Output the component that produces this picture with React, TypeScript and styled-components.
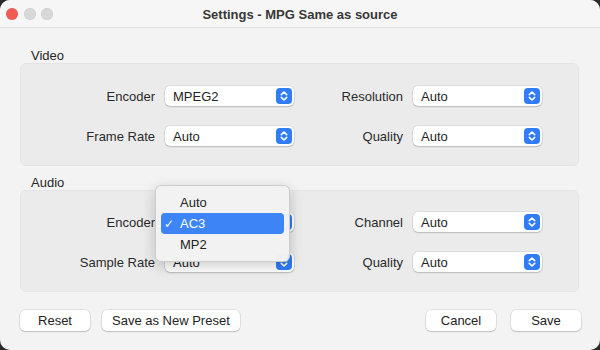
import React from 'react';
import styled, { createGlobalStyle } from 'styled-components';

const Global = createGlobalStyle`
  html, body { margin: 0; padding: 0; background: #2a2a2a; }
  body { font-family: "Liberation Sans", Arial, sans-serif; -webkit-font-smoothing: antialiased; }
  * { box-sizing: border-box; }
`;

const Window = styled.div`
  width: 600px;
  height: 350px;
  border-radius: 10px;
  overflow: hidden;
  background: #f3f3f3;
  display: flex;
  flex-direction: column;
`;

const TitleBar = styled.div`
  height: 28px;
  flex: none;
  display: grid;
  grid-template-columns: 1fr auto 1fr;
  align-items: center;
  background: #f6f6f6;
  border-bottom: 1px solid #e0e0e0;
`;

const Lights = styled.div`
  display: flex;
  gap: 5.5px;
  padding-left: 6px;
`;

const Light = styled.span<{ $color: string }>`
  width: 12px;
  height: 12px;
  border-radius: 50%;
  background: ${(p) => p.$color};
  box-shadow: inset 0 0 0 0.5px rgba(0, 0, 0, 0.08);
`;

const Title = styled.div`
  font-size: 13px;
  font-weight: 700;
  color: #383838;
  padding-top: 1px;
`;

const Content = styled.div`
  flex: none;
  display: flex;
  flex-direction: column;
  padding: 20px 21px 0 20px;
`;

const SectionLabel = styled.div<{ $top?: number }>`
  font-size: 13px;
  line-height: 15px;
  color: #262626;
  padding-left: 11px;
  margin-top: ${(p) => p.$top ?? 0}px;
`;

const Panel = styled.div<{ $padTop: number }>`
  display: grid;
  grid-template-columns: 125px 129px 1fr 129px;
  grid-auto-rows: 20px;
  column-gap: 10px;
  row-gap: 20px;
  align-items: center;
  padding: ${(p) => p.$padTop}px 36px 19px 9px;
  background: #ebebeb;
  border: 1px solid #e4e4e4;
  border-radius: 6px;
`;

const FieldLabel = styled.div`
  font-size: 13px;
  color: #2a2a2a;
  text-align: right;
  white-space: nowrap;
`;

const SelectWrap = styled.div`
  position: relative;
  height: 20px;
`;

const SelectBox = styled.div`
  height: 20px;
  width: 129px;
  background: #ffffff;
  border-radius: 5px;
  box-shadow: 0 0 0 0.5px rgba(0, 0, 0, 0.12), 0 1px 1.5px rgba(0, 0, 0, 0.16);
  display: flex;
  align-items: center;
  justify-content: space-between;
  padding: 0 2px 0 8px;
  font-size: 13px;
  color: #232323;
`;

const Menu = styled.div`
  position: absolute;
  left: -10px;
  top: -27px;
  width: 135px;
  padding: 6px 5px;
  background: rgba(242, 242, 242, 0.98);
  border: 0.5px solid rgba(0, 0, 0, 0.16);
  border-radius: 6px;
  box-shadow: 0 4px 14px rgba(0, 0, 0, 0.2);
  z-index: 5;
`;

const MenuItem = styled.div<{ $active?: boolean }>`
  height: 21px;
  display: flex;
  align-items: center;
  border-radius: 4px;
  font-size: 13px;
  background: ${(p) => (p.$active ? '#3d85f6' : 'transparent')};
  color: ${(p) => (p.$active ? '#ffffff' : '#232323')};
`;

const Check = styled.span`
  width: 19px;
  padding-left: 3px;
  font-family: "DejaVu Sans", sans-serif;
  font-size: 12px;
  font-weight: 700;
`;

const Footer = styled.div`
  display: flex;
  align-items: center;
  padding: 18px 19px 0 20px;
`;

const Group = styled.div<{ $gap: number }>`
  display: flex;
  gap: ${(p) => p.$gap}px;
`;

const Spacer = styled.div`
  flex: 1;
`;

const Button = styled.button`
  height: 21px;
  min-width: 70px;
  padding: 0 10px;
  border: none;
  background: #ffffff;
  border-radius: 5px;
  box-shadow: 0 0 0 0.5px rgba(0, 0, 0, 0.13), 0 1px 1.5px rgba(0, 0, 0, 0.16);
  font-family: "Liberation Sans", Arial, sans-serif;
  font-size: 13px;
  color: #232323;
`;

const Stepper = () => (
  <svg width="16" height="16" viewBox="0 0 16 16">
    <rect x="0" y="0" width="16" height="16" rx="4" fill="#2f7cf6" />
    <path d="M5.3 6.6 L8 4 L10.7 6.6" fill="none" stroke="#fff" strokeWidth="1.6" strokeLinecap="round" strokeLinejoin="round" />
    <path d="M5.3 9.4 L8 12 L10.7 9.4" fill="none" stroke="#fff" strokeWidth="1.6" strokeLinecap="round" strokeLinejoin="round" />
  </svg>
);

const Select = ({ value, children }: { value: string; children?: React.ReactNode }) => (
  <SelectWrap>
    <SelectBox>
      <span>{value}</span>
      <Stepper />
    </SelectBox>
    {children}
  </SelectWrap>
);

export default function App() {
  return (
    <>
      <Global />
      <Window>
        <TitleBar>
          <Lights>
            <Light $color="#f25a54" />
            <Light $color="#d8d8d8" />
            <Light $color="#d8d8d8" />
          </Lights>
          <Title>Settings - MPG Same as source</Title>
          <div />
        </TitleBar>
        <Content>
          <SectionLabel>Video</SectionLabel>
          <Panel $padTop={22}>
            <FieldLabel>Encoder</FieldLabel>
            <Select value="MPEG2" />
            <FieldLabel>Resolution</FieldLabel>
            <Select value="Auto" />
            <FieldLabel>Frame Rate</FieldLabel>
            <Select value="Auto" />
            <FieldLabel>Quality</FieldLabel>
            <Select value="Auto" />
          </Panel>
          <SectionLabel $top={9}>Audio</SectionLabel>
          <Panel $padTop={21}>
            <FieldLabel>Encoder</FieldLabel>
            <Select value="AC3">
              <Menu>
                <MenuItem>
                  <Check />
                  Auto
                </MenuItem>
                <MenuItem $active>
                  <Check>✓</Check>
                  AC3
                </MenuItem>
                <MenuItem>
                  <Check />
                  MP2
                </MenuItem>
              </Menu>
            </Select>
            <FieldLabel>Channel</FieldLabel>
            <Select value="Auto" />
            <FieldLabel>Sample Rate</FieldLabel>
            <Select value="Auto" />
            <FieldLabel>Quality</FieldLabel>
            <Select value="Auto" />
          </Panel>
        </Content>
        <Footer>
          <Group $gap={12}>
            <Button>Reset</Button>
            <Button>Save as New Preset</Button>
          </Group>
          <Spacer />
          <Group $gap={15}>
            <Button>Cancel</Button>
            <Button>Save</Button>
          </Group>
        </Footer>
      </Window>
    </>
  );
}
